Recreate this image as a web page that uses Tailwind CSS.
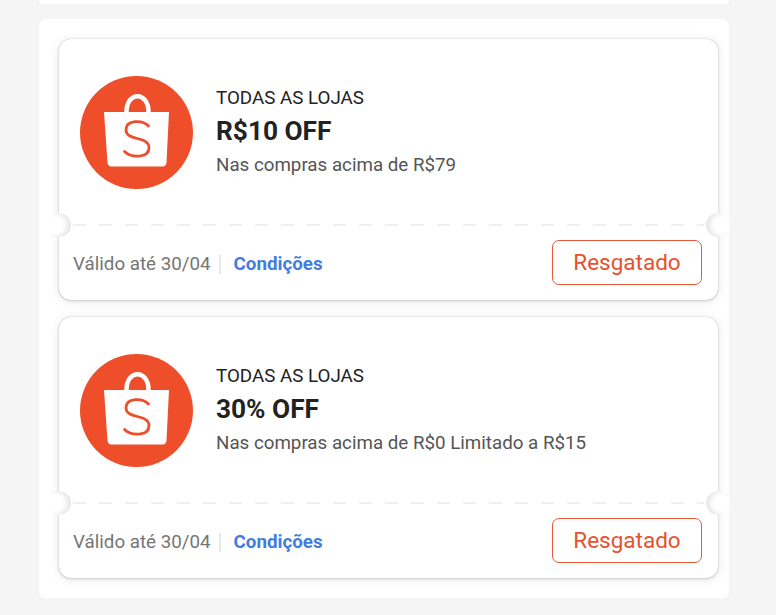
<!DOCTYPE html>
<html lang="pt-BR">
<head>
  <meta charset="UTF-8">
  <meta name="viewport" content="width=device-width, initial-scale=1.0">
  <title>Cupons</title>
  <script src="https://cdn.jsdelivr.net/npm/@tailwindcss/browser@4"></script>
</head>
<body class="bg-[#f5f5f5] h-[615px] overflow-hidden font-['Roboto',sans-serif]">
  <div class="mx-[39px] w-[690px]">
    <div class="h-[4px] bg-white rounded-b-md"></div>

    <section class="mt-[15px] bg-white rounded-md p-[20px] flex flex-col gap-[17px]">

      <!-- Coupon 1 -->
      <article class="relative w-[659px] h-[261px] bg-white rounded-[12px] shadow-[0_0_1px_rgba(0,0,0,0.3),0_1px_3px_rgba(0,0,0,0.14),0_1px_12px_rgba(0,0,0,0.09)] flex flex-col">
        <div class="h-[185px] flex items-center pl-[21px] shrink-0">
          <svg class="w-[113px] h-[113px] shrink-0 mt-[2px]" viewBox="0 0 113 113">
            <circle cx="56.5" cy="56.5" r="56.5" fill="#ef4e2b"/>
            <path d="M46.500 36 C46.500 15 68.500 15 68.500 36" fill="none" stroke="#fff" stroke-width="4.500"/>
            <path d="M24 36 H89 L86.500 86.500 Q86 90.500 82.500 90.500 H31.500 Q28 90.500 27.500 86.500 Z" fill="#fff"/>
            <path d="M68.500 50 C63 44 46 43 46 54 C46 65 69 60 69 71.500 C69 82.500 51 82 44.500 75.500" fill="none" stroke="#ef4e2b" stroke-width="2.800" stroke-linecap="round"/>
          </svg>
          <div class="ml-[23px]">
            <p class="text-[18.75px] leading-[22px] text-[#222]">TODAS AS LOJAS</p>
            <p class="mt-[7px] text-[26.25px] leading-[30px] font-bold text-[#222]">R$10 OFF</p>
            <p class="mt-[8px] text-[18.75px] leading-[22px] text-[#555]">Nas compras acima de R$79</p>
          </div>
        </div>
        <div class="h-[2px] mx-[14px] shrink-0 bg-[repeating-linear-gradient(90deg,#efefef_0,#efefef_13px,transparent_13px,transparent_26px)]"></div>
        <div class="flex-1 flex items-center justify-between pl-[14px] pr-[16px] pb-[1px]">
          <div class="flex items-center text-[18.75px] mt-[3px]">
            <span class="text-[#757575]">Válido até 30/04</span>
            <span class="w-[2px] h-[19px] bg-[#e8e8e8] mx-[8px]"></span>
            <a class="ml-[5px] font-bold text-[#3f7de0]">Condições</a>
          </div>
          <button class="w-[150px] h-[45px] border border-[#e8583a] rounded-[7px] text-[22.5px] text-[#e8502e]">Resgatado</button>
        </div>
        <span class="absolute left-[-12px] top-[174px] w-[24px] h-[24px] rounded-full bg-white shadow-[inset_-4px_0_5px_rgba(0,0,0,0.1)]"></span>
        <span class="absolute right-[-12px] top-[174px] w-[24px] h-[24px] rounded-full bg-white shadow-[inset_4px_0_5px_rgba(0,0,0,0.1)]"></span>
      </article>

      <!-- Coupon 2 -->
      <article class="relative w-[659px] h-[261px] bg-white rounded-[12px] shadow-[0_0_1px_rgba(0,0,0,0.3),0_1px_3px_rgba(0,0,0,0.14),0_1px_12px_rgba(0,0,0,0.09)] flex flex-col">
        <div class="h-[185px] flex items-center pl-[21px] shrink-0">
          <svg class="w-[113px] h-[113px] shrink-0 mt-[2px]" viewBox="0 0 113 113">
            <circle cx="56.5" cy="56.5" r="56.5" fill="#ef4e2b"/>
            <path d="M46.500 36 C46.500 15 68.500 15 68.500 36" fill="none" stroke="#fff" stroke-width="4.500"/>
            <path d="M24 36 H89 L86.500 86.500 Q86 90.500 82.500 90.500 H31.500 Q28 90.500 27.500 86.500 Z" fill="#fff"/>
            <path d="M68.500 50 C63 44 46 43 46 54 C46 65 69 60 69 71.500 C69 82.500 51 82 44.500 75.500" fill="none" stroke="#ef4e2b" stroke-width="2.800" stroke-linecap="round"/>
          </svg>
          <div class="ml-[23px]">
            <p class="text-[18.75px] leading-[22px] text-[#222]">TODAS AS LOJAS</p>
            <p class="mt-[7px] text-[26.25px] leading-[30px] font-bold text-[#222]">30% OFF</p>
            <p class="mt-[8px] text-[18.75px] leading-[22px] text-[#555]">Nas compras acima de R$0 Limitado a R$15</p>
          </div>
        </div>
        <div class="h-[2px] mx-[14px] shrink-0 bg-[repeating-linear-gradient(90deg,#efefef_0,#efefef_13px,transparent_13px,transparent_26px)]"></div>
        <div class="flex-1 flex items-center justify-between pl-[14px] pr-[16px] pb-[1px]">
          <div class="flex items-center text-[18.75px] mt-[3px]">
            <span class="text-[#757575]">Válido até 30/04</span>
            <span class="w-[2px] h-[19px] bg-[#e8e8e8] mx-[8px]"></span>
            <a class="ml-[5px] font-bold text-[#3f7de0]">Condições</a>
          </div>
          <button class="w-[150px] h-[45px] border border-[#e8583a] rounded-[7px] text-[22.5px] text-[#e8502e]">Resgatado</button>
        </div>
        <span class="absolute left-[-12px] top-[174px] w-[24px] h-[24px] rounded-full bg-white shadow-[inset_-4px_0_5px_rgba(0,0,0,0.1)]"></span>
        <span class="absolute right-[-12px] top-[174px] w-[24px] h-[24px] rounded-full bg-white shadow-[inset_4px_0_5px_rgba(0,0,0,0.1)]"></span>
      </article>

    </section>
  </div>
</body>
</html>
